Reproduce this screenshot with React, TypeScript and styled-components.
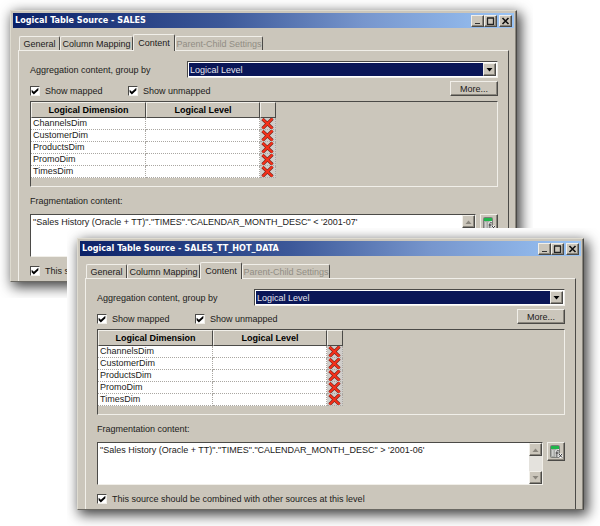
import React, { useId, useState } from "react";
import styled, { createGlobalStyle, css } from "styled-components";

const face = "#cbc6bb";
const light = "#f1efe9";
const shade = "#8a867d";
const dark = "#4b4a47";
const navy = "#0a1657";

const GlobalStyle = createGlobalStyle`
  *, *::before, *::after { box-sizing: border-box; }
  body {
    margin: 0;
    background: #fff;
    color: #1c1b1a;
    font: 9px/12px "Liberation Sans", Arial, sans-serif;
  }
  button, input, select, textarea { font: inherit; color: inherit; margin: 0; border-radius: 0; }
`;

const raised = css`
  border: 1px solid;
  border-color: ${light} ${dark} ${dark} ${light};
  box-shadow: inset -1px -1px 0 ${shade};
`;

const Stage = styled.main`
  display: grid;
  align-items: start;
`;

const Shot = styled.div<{ $front?: boolean }>`
  grid-area: 1 / 1;
  min-width: 0;
  overflow: hidden;
  background: #fff;
  padding: 10px 16px 16px 10px;
  margin: ${(p) => (p.$front ? "228px 0 0 67px" : "0 67px 0 0")};
`;

const Dialog = styled.section`
  display: flex;
  flex-direction: column;
  padding: 2px 2px 0;
  background: ${face};
  border: 1px solid;
  border-color: #dedbd0 ${dark} #6b6963 #dedbd0;
  box-shadow: inset -1px 0 0 ${shade}, 3px 4px 12px 1px rgba(0, 0, 0, 0.75);
`;

const TitleBar = styled.header`
  display: flex;
  align-items: center;
  gap: 2px;
  height: 15px;
  padding: 0 2px;
  background: linear-gradient(90deg, #0b2167, #3c5899 42%, #7796cd 70%, #9ac4f5);
`;

const Title = styled.h1`
  flex: 1;
  margin: 0;
  color: #fff;
  font: bold 9px/15px "DejaVu Sans Condensed", "DejaVu Sans", sans-serif;
  white-space: nowrap;
`;

const WindowButtons = styled.div`
  display: flex;
`;

const CaptionButton = styled.button`
  ${raised}
  display: grid;
  place-items: center;
  width: 13px;
  height: 12px;
  padding: 0;
  background: ${face};
`;

const Tabs = styled.div`
  display: flex;
  align-items: flex-end;
  height: 22px;
  margin: 0 6px;
`;

const Tab = styled.button<{ $width: number }>`
  flex: 0 0 ${(p) => p.$width}px;
  height: 14px;
  padding: 0;
  background: ${face};
  border: 1px solid;
  border-color: ${light} ${dark} transparent ${light};
  border-bottom: 0;
  border-radius: 2px 2px 0 0;
  white-space: nowrap;
  &:disabled { color: #918d84; }
  &[aria-selected="true"] {
    height: 17px;
    margin-bottom: -1px;
    z-index: 1;
  }
`;

const Panel = styled.div`
  display: flex;
  flex-direction: column;
  margin: 0 5px;
  padding: 10px 10px 4px 11px;
  border: 1px solid;
  border-color: ${light} ${dark} transparent ${light};
  border-bottom: 0;
`;

const GroupRow = styled.div`
  display: grid;
  grid-template-columns: 157px 1fr;
  align-items: center;
`;

const Combo = styled.div`
  display: flex;
  height: 17px;
  padding: 1px;
  border: 1px solid;
  border-color: ${dark} ${light} ${light} ${dark};
  background: #fff;
`;

const ComboSelect = styled.select`
  flex: 1;
  min-width: 0;
  appearance: none;
  border: 0;
  outline: 0;
  padding: 0 1px;
  background: ${navy};
  color: #e4e5ee;
`;

const ArrowButton = styled.button`
  ${raised}
  display: grid;
  place-items: center;
  width: 13px;
  height: 13px;
  padding: 0;
  background: ${face};
`;

const OptionRow = styled.div`
  display: flex;
  align-items: flex-start;
  height: 20px;
  margin-top: 3px;
`;

const Options = styled.div`
  flex: 1;
  display: grid;
  grid-template-columns: 98px 1fr;
  padding-top: 4px;
`;

const CheckLabel = styled.label`
  display: flex;
  align-items: center;
  gap: 5px;
  white-space: nowrap;
`;

const CheckBox = styled.input`
  appearance: none;
  width: 10px;
  height: 10px;
  background: #fff;
  border: 1px solid;
  border-color: ${dark} ${light} ${light} ${dark};
  &:checked::before {
    content: "";
    display: block;
    width: 8px;
    height: 8px;
    background: #000;
    clip-path: polygon(8% 34%, 36% 60%, 92% 8%, 92% 40%, 36% 94%, 8% 66%);
  }
`;

const MoreButton = styled.button`
  ${raised}
  width: 48px;
  height: 15px;
  padding: 0;
  background: ${face};
`;

const GridFrame = styled.div`
  height: 86px;
  border: 1px solid;
  border-color: ${dark} ${light} ${light} ${dark};
`;

const Grid = styled.table`
  border-collapse: separate;
  border-spacing: 0;
  table-layout: fixed;
  width: 245px;
`;

const HeadCell = styled.th<{ $width: number }>`
  width: ${(p) => p.$width}px;
  height: 16px;
  padding: 0;
  background: ${face};
  border: 1px solid;
  border-color: ${light} ${dark} ${dark} ${light};
  color: #000;
  line-height: 12px;
`;

const Cell = styled.td`
  height: 12px;
  padding: 0 2px;
  line-height: 11px;
  background: #fff;
  border: 1px dotted #aaa7a2;
  border-width: 0 1px 1px 0;
`;

const DeleteCell = styled(Cell)`
  padding: 0;
  background: #cfcdca;
`;

const DeleteButton = styled.button`
  display: block;
  width: 15px;
  height: 11px;
  padding: 0 0 0 1px;
  border: 0;
  background: none;
  svg { display: block; }
`;

const FieldLabel = styled.label`
  margin: 8px 0 7px;
`;

const FormulaRow = styled.div`
  display: flex;
  align-items: flex-start;
  gap: 4px;
  margin-bottom: 8px;
`;

const TextFrame = styled.div`
  flex: 1;
  display: flex;
  height: 43px;
  border: 1px solid;
  border-color: ${dark} ${light} ${light} ${dark};
  background: #fff;
`;

const Formula = styled.textarea`
  flex: 1;
  min-width: 0;
  resize: none;
  overflow: hidden;
  border: 0;
  outline: 0;
  padding: 1px 2px;
  background: none;
`;

const ScrollTrack = styled.div`
  display: flex;
  flex-direction: column;
  justify-content: space-between;
  background: #e4e2dd;
`;

const CalcButton = styled.button`
  ${raised}
  display: grid;
  place-items: center;
  width: 18px;
  height: 19px;
  padding: 0;
  background: ${face};
`;

const Triangle = ({ up = false, color = "#000" }: { up?: boolean; color?: string }) => (
  <svg width="7" height="4" viewBox="0 0 7 4" aria-hidden="true">
    <path d={up ? "M0.5 4L3.5 0.5L6.5 4Z" : "M0.5 0L3.5 3.5L6.5 0Z"} fill={color} />
  </svg>
);

const RedCross = () => (
  <svg width="13" height="11" viewBox="0 0 13 11" aria-hidden="true">
    <path d="M1.500 1L11.500 10.500M11.500 0.500L1.500 10.500" stroke="#6e231b" strokeWidth="3.200" />
    <path d="M1.500 1L11.500 10.500M11.500 0.500L1.500 10.500" stroke="#f5301a" strokeWidth="2.100" />
  </svg>
);

const Calculator = () => (
  <svg width="14" height="15" viewBox="0 0 14 15" aria-hidden="true">
    <rect x="1.5" y="1.5" width="9" height="12" rx="1" fill="#a9aba7" stroke="#7b7d79" />
    <rect x="2" y="2" width="8" height="3" fill="#20b64b" />
    <path d="M3 7h1.5M6 7h1.5M3 9h1.5M6 9h1M3 11h1.5" stroke="#f3f3f3" strokeWidth="1.2" />
    <path d="M9.500 6.500c-1-.8-1.600 0-1.600 1v5.500M6.500 9h3M10 10l3 3.500M13 10l-3 3.500" fill="none" stroke="#fff" strokeWidth="2.400" />
    <path d="M9.500 6.500c-1-.8-1.600 0-1.600 1v5.500M6.500 9h3M10 10l3 3.500M13 10l-3 3.500" fill="none" stroke="#333" />
  </svg>
);

const dimensions = ["ChannelsDim", "CustomerDim", "ProductsDim", "PromoDim", "TimesDim"];

function Check({ label }: { label: string }) {
  return (
    <CheckLabel>
      <CheckBox type="checkbox" defaultChecked />
      {label}
    </CheckLabel>
  );
}

function SourceDialog({ name, formula }: { name: string; formula: string }) {
  const id = useId();
  const [text, setText] = useState(formula);
  return (
    <Dialog role="dialog" aria-labelledby={`${id}-title`}>
      <TitleBar>
        <Title id={`${id}-title`}>Logical Table Source - {name}</Title>
        <WindowButtons>
          <CaptionButton aria-label="Minimize">
            <svg width="9" height="8" viewBox="0 0 9 8"><path d="M2 6.500h5" stroke="#333" /></svg>
          </CaptionButton>
          <CaptionButton aria-label="Maximize">
            <svg width="9" height="8" viewBox="0 0 9 8"><path d="M1.500 1v6.500h6V1M1 1h7" fill="none" stroke="#222" strokeWidth="1.300" /></svg>
          </CaptionButton>
        </WindowButtons>
        <CaptionButton aria-label="Close">
          <svg width="9" height="8" viewBox="0 0 9 8"><path d="M1.500 1l6 6M7.500 1l-6 6" stroke="#111" strokeWidth="1.600" /></svg>
        </CaptionButton>
      </TitleBar>
      <Tabs role="tablist">
        <Tab role="tab" $width={41}>General</Tab>
        <Tab role="tab" $width={73}>Column Mapping</Tab>
        <Tab role="tab" $width={42} aria-selected="true">Content</Tab>
        <Tab role="tab" $width={88} disabled>Parent-Child Settings</Tab>
      </Tabs>
      <Panel role="tabpanel">
        <GroupRow>
          <label htmlFor={`${id}-level`}>Aggregation content, group by</label>
          <Combo>
            <ComboSelect id={`${id}-level`}>
              <option>Logical Level</option>
            </ComboSelect>
            <ArrowButton aria-label="Open list" tabIndex={-1}><Triangle /></ArrowButton>
          </Combo>
        </GroupRow>
        <OptionRow>
          <Options>
            <Check label="Show mapped" />
            <Check label="Show unmapped" />
          </Options>
          <MoreButton>More...</MoreButton>
        </OptionRow>
        <GridFrame>
          <Grid>
            <thead>
              <tr>
                <HeadCell $width={115}>Logical Dimension</HeadCell>
                <HeadCell $width={114}>Logical Level</HeadCell>
                <HeadCell $width={16} aria-label="Remove" />
              </tr>
            </thead>
            <tbody>
              {dimensions.map((dimension) => (
                <tr key={dimension}>
                  <Cell>{dimension}</Cell>
                  <Cell />
                  <DeleteCell>
                    <DeleteButton aria-label={`Remove ${dimension}`}><RedCross /></DeleteButton>
                  </DeleteCell>
                </tr>
              ))}
            </tbody>
          </Grid>
        </GridFrame>
        <FieldLabel htmlFor={`${id}-formula`}>Fragmentation content:</FieldLabel>
        <FormulaRow>
          <TextFrame>
            <Formula id={`${id}-formula`} value={text} spellCheck={false} onChange={(e) => setText(e.target.value)} />
            <ScrollTrack>
              <ArrowButton aria-label="Scroll up"><Triangle up color={shade} /></ArrowButton>
              <ArrowButton aria-label="Scroll down"><Triangle color={shade} /></ArrowButton>
            </ScrollTrack>
          </TextFrame>
          <CalcButton aria-label="Expression builder"><Calculator /></CalcButton>
        </FormulaRow>
        <Check label="This source should be combined with other sources at this level" />
      </Panel>
    </Dialog>
  );
}

export default function App() {
  return (
    <>
      <GlobalStyle />
      <Stage>
        <Shot>
          <SourceDialog name="SALES" formula={`"Sales History (Oracle + TT)"."TIMES"."CALENDAR_MONTH_DESC" < '2001-07'`} />
        </Shot>
        <Shot $front>
          <SourceDialog name="SALES_TT_HOT_DATA" formula={`"Sales History (Oracle + TT)"."TIMES"."CALENDAR_MONTH_DESC" > '2001-06'`} />
        </Shot>
      </Stage>
    </>
  );
}
